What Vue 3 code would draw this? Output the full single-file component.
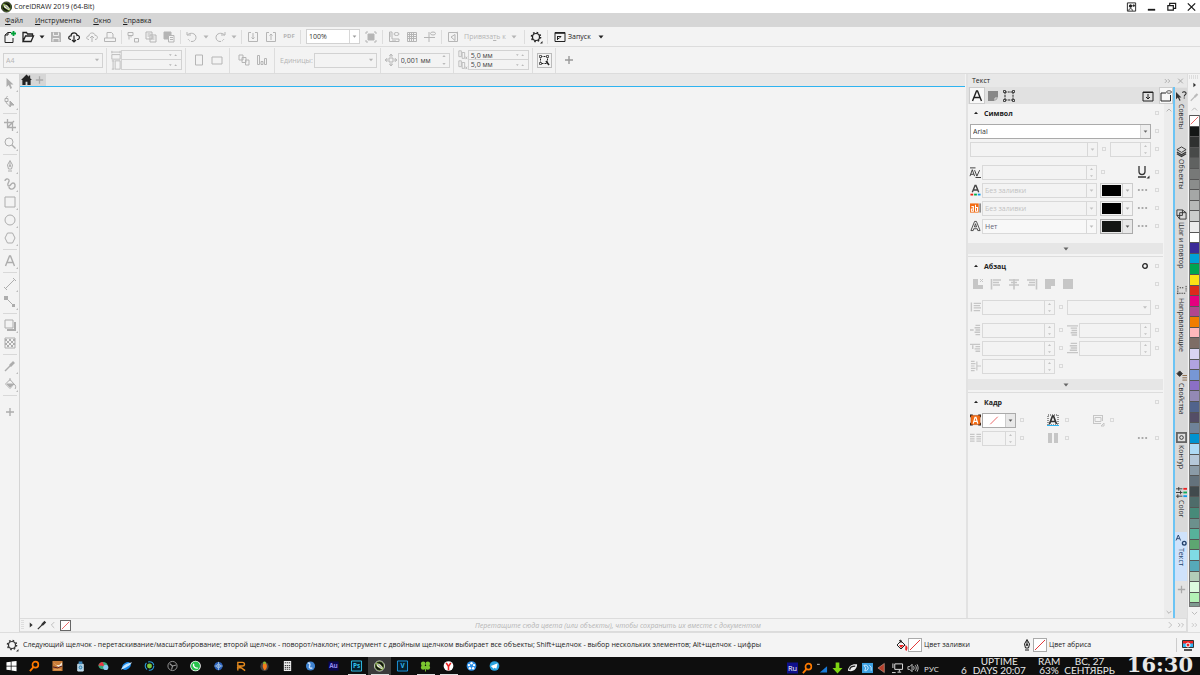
<script setup>
import { h } from 'vue'

const glyphs = {
  logo: '<circle cx="6" cy="6" r="5.500" fill="#111"/><circle cx="6" cy="6" r="4.800" fill="none" stroke="#6a9a2c" stroke-width=".7"/><path d="M2.500 3L6.500 4L9.500 7.500L9.500 9.500L7.500 9L3.500 6.500z" fill="#fff" stroke="#9fd13a" stroke-width=".6"/><path d="M4 4l4 4" stroke="#222" stroke-width=".8"/>',
  user: '<path d="M1.500 1.500h9v9h-9z"/><circle cx="5" cy="5" r="1.400" fill="currentColor"/><path d="M3 10c0-3 4-3 4 0M8.500 3v3M7 4.500h3"/>',
  min: '<path d="M2 9h8" stroke-width="2"/>',
  restore: '<path d="M2 4.500h6v5H2zM4 4V2h6.500v5.500H8.500" stroke-width="1.300"/>',
  close: '<path d="M2 2l8 8M10 2l-8 8" stroke-width="1.400"/>',
  fresh: '<path d="M7 1.500H4L1 4v7.500h8V7M4 1.500V4H1"/><path d="M9.500 0v5M7 2.500h5" stroke="#00a13a" stroke-width="1.800"/>',
  open: '<path d="M1 10.500V1.500h3.500l1 1.500h5V5M1 10.500L3.500 5h8l-2.500 5.500z" stroke-width="1.300"/>',
  save: '<path d="M1 1h9l1 1v9H1z" fill="currentColor" stroke="none"/><path d="M3.500 1.500v3h5v-3M3 10.500v-3h6v3" stroke="#eee"/>',
  cloud: '<path d="M3 8.500C-.5 8.500.5 4.500 3 5C3 1 9 1 9 4.500c3-.5 3.500 4 0 4M6 4.500v6.500M4 9l2 2l2-2" stroke-width="1.200"/>',
  cloudup: '<path d="M3 8.500C-.5 8.500.5 4.500 3 5C3 1 9 1 9 4.500c3-.5 3.500 4 0 4M6 11V5M4 7l2-2l2 2"/>',
  print: '<path d="M3 7V1.500h4.500L9 3v4M.5 10.500h11V7H.5z"/>',
  cut: '<path d="M1 1.500h5v3H1zM2 4.500v4M4 4.500v2M7.500 7.500h4v3.500h-4z"/>',
  copy: '<path d="M1 1h6v7H1zM5 4h6v7H5zM2.500 3h3M2.500 5h2M6.500 6h3M6.500 8h3"/>',
  paste: '<path d="M1 1h7v3H5v4H1z" fill="currentColor"/><path d="M5.500 4.500h5.500v6.500H5.500zM7 6.500h3M7 8.500h3"/>',
  undo: '<path d="M1 4h4M1 4V1M1.500 4C4 1 10 2 10 6.500C10 9 8 10.500 6 10.500" /><path d="M6 10.500C4 10.500 3 9.500 2 8" stroke-dasharray="1 1"/>',
  redo: '<path d="M11 4H7M11 4V1M10.500 4C8 1 2 2 2 6.500C2 9 4 10.500 6 10.500"/><path d="M6 10.500C8 10.500 9 9.500 10 8" stroke-dasharray="1 1"/>',
  down: '<path d="M4 1.500H1.500v9h9v-9H8M6 2v6M4.500 6.500L6 8l1.500-1.500"/>',
  up: '<path d="M4 1.500H1.500v9h9v-9H8M6 9V3M4.500 4.500L6 3l1.500 1.500"/>',
  fit: '<path d="M3 3h6v6H3z" fill="currentColor"/><path d="M1 3V1h2M9 1h2v2M11 9v2H9M3 11H1V9"/>',
  ruler: '<path d="M1.500 1v9.500H11V8H4V1zM2 3h1M2 5h1M5 9v1M7 9v1"/><ellipse cx="8.500" cy="3" rx="2.500" ry="1.500"/>',
  grid: '<path d="M1.500 1.500h9v9h-9zM1.500 3.500h9M1.500 5.500h9M1.500 7.500h9M3.500 1.500v9M5.500 1.500v9M7.500 1.500v9"/>',
  guide: '<path d="M0 6.500h11M5 1v10"/><ellipse cx="9" cy="2.500" rx="2.500" ry="1.500"/>',
  snap: '<path d="M1.500 1.500h9v9h-9zM8 3.500L4 6l4 3.500M8 3.500v6M9 2l2-1"/>',
  gear: '<circle cx="6" cy="6" r="3.500" stroke-width="1.200"/><circle cx="6" cy="6" r="4.600" stroke-width="1.400" stroke-dasharray="1.600 2.020"/><path d="M12.500 10v2.500H10z" fill="currentColor" stroke="none"/>',
  launch: '<path d="M1 1.500h10v9H1z"/><path d="M1 2h10" stroke-width="1.600"/><path d="M3.500 5v4M3.500 5.500H7L5 7.500H3.500"/>',
  landscape: '<path d="M1 3h10v7H1z"/>', portrait: '<path d="M2.500 1h7v10h-7z"/>',
  pagew: '<path d="M1 5.500h10v5.500H1zM1 1v3M11 1v3M1 2.500h10"/>', pageh: '<path d="M5 1h6v10H5zM1 1h3M1 11h3M2.500 1v10"/>',
  pages: '<path d="M1 1h4v5H1zM4 3.500h4v5H4zM7.500 6h3.500v5H7.500z"/>',
  bars: '<path d="M1.500 1.500h2v9h-2zM5 7.500h2v3H5zM8.500 4.500h2v6h-2z"/>',
  nudge: '<path d="M4 4h4v4H4zM6 0L4.500 2h3zM6 12l1.500-2h-3zM0 6l2-1.500v3zM12 6l-2-1.500v3z"/>',
  dup: '<path d="M1 1h3v7H1zM5 3h3v7H5zM9 8l2 3M11 8l-2 3"/>',
  bounds: '<path d="M2.500 2.500h7v7h-7z" stroke-dasharray="2 1"/><path d="M1.500 1.500h2v2h-2zM8.500 1.500h2v2h-2zM1.500 8.500h2v2h-2z" fill="#f3f3f3" stroke-width=".7"/><path d="M8 7l3 4" stroke-width="1.500"/>',
  plus: '<path d="M6 2v8M2 6h8" stroke-width="1.400"/>',
  home: '<path d="M6 0L0 6h1.500v5.500H5V8h2v3.500h3.500V6H12L10 4V1H8.500v1.500z" fill="currentColor" stroke="none"/>',
  pick: '<path d="M2.500 0v9l2.200-2L6.500 11l1.500-1L6.500 6.500h3z" fill="currentColor" stroke="none"/>',
  shape: '<path d="M3.500 0C0 4 2 8 6 10" /><path d="M1 2.500h3v3H1z" fill="#f3f3f3"/><path d="M6 5l4 4H7l-1 2z" fill="currentColor"/>',
  crop: '<path d="M3.500 0v8.500H12M0 3.500h8.500V12M3.500 8.500L10 2" stroke-width="1.300"/>',
  zoom: '<circle cx="5" cy="5" r="4"/><path d="M8 8l3.500 3.500" stroke-width="1.400"/>',
  pen: '<path d="M6 .5L3.500 5l1 4h3l1-4zM6 2v4M4 11h4"/><circle cx="6" cy="6" r=".8"/>',
  curve: '<path d="M1 3C1 1 4 0 5 2S2.500 5.500 4 7.500S7 5 9 5s3 3 1 5s-5 1-5-1" stroke-width="1.400"/>',
  rect: '<path d="M1 1h10v10H1z"/>', circle: '<circle cx="6" cy="6" r="5"/>', hex: '<path d="M3.500 1h5L11 6l-2.500 5h-5L1 6z"/>',
  text: '<path d="M1.500 11L5.500 1h1l4 10M3 7.500h6" stroke-width="1.400"/>',
  line: '<path d="M1.500 10.500l9-9M0 9l3 3M9 0l3 3"/>',
  connect: '<path d="M2 2l8 8"/><path d="M0 0h4v4H0zM8 8h3v3H8z" fill="currentColor" stroke="none"/>',
  shadow: '<path d="M3 11h8V3" stroke-width="2"/><path d="M1 1h8v8H1z" fill="#f3f3f3"/>',
  checker: '<path d="M1 1h10v10H1z"/><path d="M1 3h10M1 7h10" stroke-width="2" stroke-dasharray="2 2"/><path d="M3 5h8M3 9h8" stroke-width="2" stroke-dasharray="2 2"/>',
  dropper: '<path d="M1 11l6-6" stroke-width="1.500"/><path d="M6 4l2 2M7 5l3-3" stroke-width="2.800"/>',
  bucket: '<path d="M1.500 6l4.500-4.500l4 4.500l-4 4.500zM6 3V0M10 6c2 1 2 4 1 5" /><path d="M3 6h6L6 9z" fill="currentColor"/>',
  bucketred: '<path d="M1 6l4-4l4 4l-4 4zM5 4V1l-2 1" stroke="#222"/><path d="M3 6h5L5 9zM9.500 6c3 2 2 4 1 6c-2-1-1-3-1-6" fill="#e22" stroke="none"/>',
  slash: '<path d="M1 11L11 1" stroke="#e33a3a"/>',
  chevl: '<path d="M7.500 2.500L4 6l3.500 3.500"/>', chevr: '<path d="M4.500 2.500L8 6l-3.500 3.500"/>', chevrr: '<path d="M2.500 3.500L5 6L2.500 8.500M6.500 3.500L9 6L6.500 8.500"/>',
  chevu: '<path d="M2.500 8L6 4.500L9.500 8" stroke-width="1.300"/>', chevd: '<path d="M2.500 4.500L6 8l3.500-3.500" stroke-width="1.300"/>',
  tri: '<path d="M3.500 4.500h5L6 7.500z" fill="currentColor" stroke="none"/>', triu: '<path d="M3 7.500h6L6 4z" fill="currentColor" stroke="none"/>', trir: '<path d="M4.500 3v6L8 6z" fill="currentColor" stroke="none"/>',
  spin: '<path d="M4 2.500h4L6 0zM4 9.500h4L6 12z" fill="currentColor" stroke="none"/>', spinh: '<path d="M0 5h4L2 7.500zM8 7.500h4L10 5z" fill="currentColor" stroke="none"/>',
  para: '<path d="M1 1h10v7L8 11H1z" fill="currentColor" stroke="none"/><path d="M8 11V8h3" stroke="#ddd"/>',
  frame: '<path d="M2 2h8v8H2z" stroke-dasharray="2 .7"/><path d="M.5 .5h2v2h-2zM9.500 .5h2v2h-2zM.5 9.500h2v2h-2zM9.500 9.500h2v2h-2z" fill="#e1e1e1" stroke-width=".8"/>',
  importb: '<path d="M1 2h10v9H1zM6 4v5M4 7l2 2l2-2M1 2.500h10"/>',
  eyebox: '<path d="M6 3H1v8h9.500V5"/><ellipse cx="9" cy="2" rx="2.500" ry="1.300" stroke-width=".7"/>',
  kern: '<path d="M0 10.500l2.500-7L5 10.500M1 8.500h3M5 4l2.500 6.500L10.500 4M0 1.500h6M6 12h6"/>',
  underline: '<path d="M2 0v5.500c0 4 6 4 6 0V0M1 11h8" stroke-width="1.300"/><path d="M12.500 9.500v3h-3z" fill="currentColor" stroke="none"/>',
  afill: '<path d="M2.500 8.500L5.500 1h1l3 7.500M4 6h4" stroke="#444" stroke-width="1.500"/><path d="M.5 11h3" stroke="#e21" stroke-width="2"/><path d="M4.500 11h3" stroke="#0a4" stroke-width="2"/><path d="M8.500 11h3" stroke="#19e" stroke-width="2"/>',
  ab: '<path d="M0 1h9.500v10H0z" fill="#f26b13" stroke="none"/><path d="M1.500 4.500h2.200v5H1.500v-2.500h2M6 2.500v7h2.200v-4H6" stroke="#fff" stroke-width="1.100"/><path d="M11 1v10" stroke="#333"/>',
  aout: '<path d="M1 11L5 1h2l4 10H8.500L8 9H4l-.5 2zM4.800 7h2.400L6 3.500z" stroke-width=".9"/>',
  none: '<path d="M1 1h5v6h5v4H1z" fill="currentColor" stroke="none"/><path d="M8 1l3 3M11 1L8 4"/>',
  left: '<path d="M1.500 1v10.500M3 2h8M3 4.500h6M3 7h7" stroke-width="1.600"/>', center: '<path d="M1 2h10M3 4.500h6M1 7h10M6 1v10.500" stroke-width="1.600"/>', right: '<path d="M10.500 1v10.500M1 2h8M3 4.500h6M2 7h7" stroke-width="1.600"/>',
  just: '<path d="M1 1h10v7H7v3H1z" fill="currentColor" stroke="none"/>', full: '<path d="M1 1h10v10H1z" fill="currentColor" stroke="none"/>',
  lead: '<path d="M1.500 1v10M4 2h8M4 4.500h7M4 7h8M4 10h7" stroke-width="1.500"/>', indent: '<path d="M0 6h4M6 1h5M5 3.500h6M6 6h5M5 8.500h6M6 11h5" stroke-width="1.500"/>', first: '<path d="M0 2h11M6 4.500h5M5 7h6M6 9.500h5M3 3v4" stroke-width="1.500"/>',
  rind: '<path d="M1 1h4M1 3.500h5M1 6h4M1 8.500h5M1 11h4M7 6h5M7.500 1v10" stroke-width="1.300"/>', before: '<path d="M0 1.500h12M4 4h7M5 6.500h6M4 9h7M5 11.500h6" stroke-width="1.500"/>', after: '<path d="M4 1h7M3 3.500h8M4 6h7M3 8.500h8M0 11h12" stroke-width="1.500"/>',
  ring: '<circle cx="6" cy="6" r="2.300" stroke-width="1.300"/>', dots: '<path d="M1 6h2M5 6h2M9 6h2" stroke-width="2"/>',
  aorange: '<path d="M0 0h3v3H0zM9 0h3v3H9zM0 9h3v3H0zM9 9h3v3H9z" fill="#222" stroke="none"/><path d="M1 1h10v10H1z" fill="#f26b13" stroke="#a3400a" stroke-width=".5"/><path d="M3.500 10L5.500 3h1l2 7M4.500 7.500h3" stroke="#fff" stroke-width="1.300"/>',
  agrid: '<path d="M1 1h10v10H1z" stroke-dasharray="1 1"/><path d="M2.500 10L5.500 2h1l3 8M4 7.500h4" stroke-width="1.700"/><path d="M0 11.500h12" stroke="#2bb4f2"/>',
  wrap: '<path d="M1 1.500h10M3 3.500h6v4H3zM1 9.500h8M1.500 1v9M10.500 1v6M12 9v3H9z"/>', cols: '<path d="M0 2h5M0 4.500h5M0 7h5M0 9.500h5M7 2h5M7 4.500h5M7 7h5M7 9.500h5" stroke-width="1.400"/>', cols2: '<path d="M1 1h4v10H1zM7 1h4v10H7z" fill="currentColor" stroke="none"/>',
  hint: '<path d="M0 1v8l2-2l2 4l1-1l-1.500-3H6z" fill="currentColor" stroke="none"/><path d="M7 2c1-2 4-1 4 .5C11 4 9 4 9 6M9 7v1.200" stroke-width="1.200"/>',
  layers: '<path d="M1 4l5-3l5 3l-5 3z"/><path d="M1 6.500l5 3l5-3M1 8.500l5 3l5-3" stroke-width="1.400"/>', step: '<path d="M1 1h6v6H1zM4 4h7v7H4zM1 7l3 4M7 1l4 3"/>',
  guides: '<path d="M2 1v10M1 9h10M11 1v6M4 3h4" stroke-dasharray="1.500 1"/>', props: '<path d="M1 4l3-3l3 3l-3 3z" fill="currentColor"/><path d="M7 6h5M7 8.500h5M7 11h5" stroke="#864"/>',
  contour: '<path d="M0 0h12v12H0z" fill="#666" stroke="none"/><path d="M2 2h8v8H2z" fill="#ddd" stroke="none"/><circle cx="6" cy="6" r="2"/>',
  color: '<path d="M0 2h7M0 6h7M0 10h7M3 0v4M5 4v4M2 8v4"/><path d="M8 2h4" stroke="#e22" stroke-width="2"/><path d="M8 6h4" stroke="#1a5" stroke-width="2"/><path d="M8 10h4" stroke="#19e" stroke-width="2"/>',
  textgear: '<path d="M0 6l2.500-6L5 6M1 4h3"/><circle cx="9" cy="9" r="2" stroke-width="1.500"/>',
  monitor: '<path d="M.5 1.500h11v7H.5z" fill="#2bb4f2" stroke="#333"/><path d="M1 2h10v2.500H1z" fill="#e22" stroke="none"/><circle cx="6" cy="6" r="2" stroke="#fff" fill="#e22"/><path d="M2 11h8" stroke-width="1.500"/>',
  win: '<path d="M.5 2l4.700-.7v4.400H.5zM6 1.200L11.500.5v5.200H6zM.5 6.500h4.700v4.200L.5 10zM6 6.500h5.500v5.200L6 11z" fill="#fff" stroke="none"/>',
  find: '<circle cx="7" cy="4.500" r="3.200" stroke="#ff7a00" stroke-width="1.800"/><path d="M5 7l-4 4.500" stroke="#ff7a00" stroke-width="2"/>',
  fox: '<path d="M.5.5h11v11H.5z" fill="#c97c38" stroke="none"/><path d="M1 2l4 3h3l3-3v4L7 7z" fill="#f3e6d2" stroke="none"/><path d="M1 7l5 1l5-2" stroke="#412"/><path d="M2 10h8" stroke="#e8a862"/>',
  trash: '<path d="M3 4h6v7.500H3z" fill="#a9cfe5" stroke="#d8eaf5"/><path d="M4 1h4v3H4z" fill="#3c84b8" stroke="none"/><circle cx="6" cy="7.500" r="1.500" stroke="#27a"/>',
  ball: '<ellipse cx="5.500" cy="5.500" rx="5" ry="4" fill="#39a87c" stroke="none"/><path d="M5 1.500C2 2 1 4 .5 5.500L7 6z" fill="#e34" stroke="none"/><circle cx="8.500" cy="7.500" r="2.800" fill="#8cc9ee" stroke="none"/>',
  planet: '<ellipse cx="6" cy="6" rx="5" ry="3.500" transform="rotate(-35 6 6)" fill="#1686e8" stroke="none"/><path d="M0 10C2 5 7 3 12 2C10 6 5 8 0 10" fill="#bfe3ff" stroke="none"/>',
  eye: '<circle cx="6" cy="6" r="4.700" stroke="#2b9cd8" stroke-width="1.200" stroke-dasharray="8 2"/><circle cx="6" cy="6" r="2.700" fill="#7ec83e" stroke="none"/>',
  obs: '<circle cx="6" cy="6" r="5" stroke="#999"/><path d="M6 6L3 3.500M6 6l4-1M6 6L5 10" stroke="#999" stroke-width="1.200"/>',
  wa: '<circle cx="6" cy="6" r="5.800" fill="#fff" stroke="none"/><circle cx="6" cy="6" r="4.900" fill="#28c24c" stroke="none"/><path d="M4 3.500c-1 3 2 5.500 4.500 4.500" stroke="#fff" stroke-width="1.500"/>',
  globe: '<circle cx="6" cy="6" r="4.500" fill="#2c62bd" stroke="none"/><path d="M6 1.500v9M1.500 6h9" stroke="#9bd"/><circle cx="6" cy="6" r="2" stroke="#9bd"/>',
  rr: '<path d="M2 11V2h5c3 0 3 4 0 4H3l7 5M1 8h6" stroke="#e58a1e" stroke-width="1.500"/>',
  fl: '<ellipse cx="6" cy="6.500" rx="4.500" ry="5" fill="#444" stroke="none"/><path d="M6 1.500c4 2 3 8 0 9c-2-2-3-6 0-9" fill="#f57c1c" stroke="none"/><circle cx="6" cy="2.500" r="1.500" fill="#8b3" stroke="none"/>',
  calc: '<path d="M2 .5h8v11H2z" fill="#eee" stroke="none"/><path d="M3 2.500h6M3 5.500h6M3 7.500h6M3 9.500h6" stroke="#222" stroke-dasharray="1.500 .7"/>',
  sphere: '<circle cx="6" cy="6" r="5" fill="#3f83d0" stroke="none"/><path d="M3 3c2-1 3 1 2 3s1 3 3 2" stroke="#cfe5ff" stroke-width="1.500"/>',
  au: '<path d="M.5 1h11v10H.5z" fill="#0b0650" stroke="none"/><text x="6" y="8.500" text-anchor="middle" font-size="7" font-weight="700" fill="#928cf0" stroke="none">Au</text>',
  ps: '<path d="M.5 .5h11v11H.5z" fill="#06202e" stroke="#31c5f0"/><text x="6" y="8.500" text-anchor="middle" font-size="7" font-weight="700" fill="#31c5f0" stroke="none">Ps</text>',
  vv: '<path d="M.5 .5h11v11H.5z" fill="#06202e" stroke="#1e9be8"/><text x="6" y="8.500" text-anchor="middle" font-size="7" font-weight="700" fill="#31b5f0" stroke="none">V</text>',
  clover: '<g fill="#7cc62f" stroke="none"><circle cx="3.500" cy="3.500" r="2.500"/><circle cx="8.500" cy="3.500" r="2.500"/><circle cx="3.500" cy="7.500" r="2.500"/><circle cx="8.500" cy="7.500" r="2.500"/></g><path d="M6 6v6" stroke="#7cc62f"/>',
  ya: '<circle cx="6" cy="6" r="5.300" fill="#fff" stroke="none"/><path d="M3.500 2.500L6 6.500L8.500 2.500M6 6v4.500" stroke="#e22" stroke-width="1.700"/>',
  flower: '<circle cx="6" cy="6" r="5.300" fill="#2c8fe8" stroke="none"/><g fill="#fff" stroke="none"><circle cx="6" cy="3" r="1.300"/><circle cx="8.800" cy="5" r="1.300"/><circle cx="7.800" cy="8.400" r="1.300"/><circle cx="4.200" cy="8.400" r="1.300"/><circle cx="3.200" cy="5" r="1.300"/></g>',
  tg: '<circle cx="6" cy="6" r="5.300" fill="#2aa3df" stroke="none"/><path d="M2 6l7.500-3L8 9L6 8L5 9z" fill="#fff" stroke="none"/>',
  ru: '<path d="M0 0h12v12H0z" fill="#10108c" stroke="none"/><text x="6" y="9" text-anchor="middle" font-size="8" fill="#fff" stroke="none">Ru</text>',
  tri3: '<path d="M11 4v7H3z" fill="#1a7ad8" stroke="none"/><path d="M0 2h3" stroke="#ccc"/>', arrow: '<path d="M4 0h4v6h3.500L6 12L.5 6H4z" fill="#7fd612" stroke="none"/>',
  leaf: '<path d="M1 9C1 4 6 1 11 2C11 7 7 11 1 9" fill="#eee" stroke="none"/><path d="M3 8c0-3 3-4 6-4" stroke="#222" stroke-width="1.500"/>',
  blue: '<path d="M0 .5h12v11H0z" fill="#3c9fe0" stroke="none"/><path d="M2 3h3l2 3l-2 3H3l1-3zM8 3l2 2v4" stroke="#cfeaff"/>', horn: '<path d="M1 6l7-5v10z" fill="#b5402c" stroke="#e8d0c0" stroke-width=".5"/>',
  net: '<path d="M3 1.500h8.500v6H3zM6 10.500h4M8 8v2M1 1v5M0 11h4" stroke="#eee"/>', sound: '<path d="M1 4.500h2L5.500 2v8L3 7.500H1zM7 4c1 1 1 3 0 4M9 3c1.500 2 1.500 4 0 6M11 2c1.500 3 1.500 5 0 8" stroke="#ddd" stroke-width=".9"/>'
}
const Ico = (p) => h('svg', { viewBox: '0 0 12 12', class: 'ico', 'aria-hidden': 'true', innerHTML: glyphs[p.n] })
Ico.props = ['n']

const toolbar = ['fresh*', 'open*', 'v*', 'save', 'cloud*', 'cloudup', 'print', '|', 'cut', 'copy', 'paste', '|', 'undo', 'v', 'redo', 'v', '|', 'down', 'up', 'PDF', '|']
const view = ['fit', '|', 'ruler', 'grid', 'guide', '|', 'snap']
const tools = ['pick', 'shape', '|', 'crop', 'zoom', '|', 'pen', 'curve', 'rect', 'circle', 'hex', '|', 'text', '|', 'line', 'connect', '|', 'shadow', 'checker', '|', 'dropper', 'bucket', '|', 'plus']
const tabs = [['hint', 'Советы', 55], ['layers', 'Объекты', 63], ['step', 'Шаг и повтор', 76], ['guides', 'Направляющие', 85], ['props', 'Свойства', 62], ['contour', 'Контур', 55], ['color', 'Color', 48], ['textgear', 'Текст', 49]]
const fills = [['afill', 'Без заливки', false], ['ab', 'Без заливки', false], ['aout', 'Нет', true]]
const swatches = '#141716 #2f3130 #484a49 #606261 #777978 #8b8d8c #a5a7a6 #b7b9b8 #cbcdcc #ececec #ffffff #3b2b98 #00a0d6 #00a551 #fbe116 #dc2a1b #e4007f #b1468f #f07d00 #ffb8bb #7e6d66 #d9d4f3 #b1a3e0 #7797d5 #8b6fc6 #9389b5 #51638c #544d66 #6f8299 #0092d0 #aedaf5 #b6c8d9 #8b9ba7 #64727c #414a4d #4e6c6a #478a79 #6c908d #57b29b #5da671 #7fdbe5 #56a9b9 #b2ccb8 #dcfbdf #b3f2b6'.split(' ')
const apps = ['win', 'find', 'fox', 'trash', 'ball', 'planet', 'eye', 'obs', 'wa', 'globe', 'rr', 'fl', 'calc', 'sphere', 'au', 'ps', 'logo', 'vv', 'clover', 'ya', 'flower', 'tg']
const running = ['ps', 'logo', 'clover', 'ya']
const tray = ['ru', 'find', 'tri3', 'arrow', 'leaf', 'blue', 'horn', 'net', 'sound']
</script>

<template>
  <div class="app">
    <header class="title"><Ico n="logo" /><span class="grow">CorelDRAW 2019 (64-Bit)</span>
      <button v-for="b in ['user', 'min', 'restore', 'close']" :key="b" :aria-label="b" class="wbtn"><Ico :n="b" /></button>
    </header>
    <nav class="menu">
      <a href="#"><u>Ф</u>айл</a><a href="#"><u>И</u>нструменты</a><a href="#"><u>О</u>кно</a><a href="#"><u>С</u>правка</a>
    </nav>
    <div class="bar std">
      <template v-for="(t, i) in toolbar" :key="i">
        <i v-if="t === '|'" class="sep"></i>
        <button v-else-if="t === 'PDF'" class="tb pdf">PDF</button>
        <button v-else :class="['tb', { on: t.endsWith('*'), arr: t[0] === 'v' }]" :aria-label="t"><Ico :n="t[0] === 'v' ? 'tri' : t.replace('*', '')" /></button>
      </template>
      <span class="field zoomf lit"><select aria-label="Масштаб"><option>100%</option></select><Ico n="tri" /></span>
      <template v-for="(t, i) in view" :key="'w' + i">
        <i v-if="t === '|'" class="sep"></i>
        <button v-else class="tb" :aria-label="t"><Ico :n="t" /></button>
      </template>
      <button class="tbl snapto"><span>Привяза<u>т</u>ь к</span><Ico n="tri" /></button>
      <i class="sep"></i><button class="tb on" aria-label="Параметры"><Ico n="gear" /></button><i class="sep"></i>
      <button class="tbl on launch"><Ico n="launch" /><span>Запуск</span><Ico n="tri" /></button>
    </div>
    <div class="bar prop">
      <span class="field paper"><select aria-label="Размер страницы" disabled><option>A4</option></select><Ico n="tri" /></span>
      <i class="sep"></i>
      <div class="pair"><Ico n="pagew" /><Ico n="pageh" /></div>
      <div class="pair stack"><span class="field"><input aria-label="Ширина" disabled><Ico n="spinh" /></span><span class="field"><input aria-label="Высота" disabled><Ico n="spinh" /></span></div>
      <i class="sep"></i><button class="tb" aria-label="Книжная"><Ico n="portrait" /></button><button class="tb" aria-label="Альбомная"><Ico n="landscape" /></button>
      <i class="sep wide"></i><button class="tb" aria-label="Все страницы"><Ico n="pages" /></button><button class="tb" aria-label="Текущая страница"><Ico n="bars" /></button>
      <i class="sep wide"></i>
      <label class="unit"><span>Единицы:</span><span class="field units"><select disabled><option></option></select><Ico n="tri" /></span></label>
      <i class="sep"></i>
      <label class="unit on2"><Ico n="nudge" /><span class="field nudge"><input value="0,001 мм"><Ico n="spin" /></span></label>
      <i class="sep"></i>
      <div class="pair"><Ico n="dup" /><Ico n="dup" /></div>
      <div class="pair stack on2"><span class="field"><input aria-label="X" value="5,0 мм"><Ico n="spinh" /></span><span class="field"><input aria-label="Y" value="5,0 мм"><Ico n="spinh" /></span></div>
      <i class="sep"></i><button class="tb on boxed" aria-label="Рамка"><Ico n="bounds" /></button><i class="sep"></i>
      <button class="tb add" aria-label="Добавить"><Ico n="plus" /></button>
    </div>
    <main class="body">
      <aside class="tools">
        <template v-for="(t, i) in tools" :key="i"><hr v-if="t === '|'"><button v-else :aria-label="t" :class="{ more: t !== 'plus' && t !== 'checker' }"><Ico :n="t" /></button></template>
      </aside>
      <div class="center">
        <div class="work">
          <section class="doc"><div class="doctabs"><button class="on" aria-label="Главная"><Ico n="home" /></button><button aria-label="Новая вкладка"><Ico n="plus" /></button></div></section>
          <section class="docker">
            <header><span class="grow">Текст</span><button aria-label="Свернуть"><Ico n="chevrr" /></button><button aria-label="Закрыть"><Ico n="close" /></button></header>
            <div class="dbody">
              <div class="modes"><button class="sel" aria-label="Символ"><Ico n="text" /></button><button aria-label="Абзац"><Ico n="para" class="grey" /></button><button aria-label="Кадр"><Ico n="frame" /></button><i class="grow"></i><button aria-label="Импорт"><Ico n="importb" /></button><button class="sel" aria-label="Вид"><Ico n="eyebox" /></button></div>
              <div class="scroll">
                <div class="panel">
                  <h2><Ico n="triu" /><span class="grow">Символ</span><button class="dot" aria-label="Стиль"></button></h2>
                  <div class="row"><span class="field fx lit dark"><select aria-label="Шрифт"><option>Arial</option></select><Ico n="tri" /></span><button class="dot" aria-label="Стиль"></button></div>
                  <div class="row"><span class="field fx"><select aria-label="Начертание" disabled></select><Ico n="tri" /></span><button class="dot" aria-label="Стиль"></button><span class="field f41"><input aria-label="Размер" disabled><Ico n="spin" /></span><button class="dot" aria-label="Стиль"></button></div>
                  <div class="row gap"><Ico n="kern" class="lead dk" /><span class="field fx"><input aria-label="Кернинг" disabled><Ico n="spin" /></span><button class="dot" aria-label="Стиль"></button><button class="uline" aria-label="Подчеркивание"><Ico n="underline" /></button><button class="dot" aria-label="Стиль"></button></div>
                  <div v-for="(f, i) in fills" :key="i" class="row"><Ico :n="f[0]" class="lead dk" /><span :class="['field', 'fx', { half: f[2] }]"><select :aria-label="f[1]"><option>{{ f[1] }}</option></select><Ico n="tri" /></span>
                    <button :class="['chip', { act: f[2] }]" aria-label="Цвет"><b></b><Ico n="tri" /></button><button class="dots" aria-label="Ещё"><Ico n="dots" /></button><button class="dot" aria-label="Стиль"></button></div>
                  <button class="fold" aria-label="Развернуть"><Ico n="tri" /></button>
                </div>
                <div class="panel">
                  <h2><Ico n="triu" /><span class="grow">Абзац</span><Ico n="ring" class="ringi" /><button class="dot" aria-label="Стиль"></button></h2>
                  <div class="row aligns"><button v-for="a in ['none', 'left', 'center', 'right', 'just', 'full']" :key="a" :aria-label="a"><Ico :n="a" /></button><i class="grow"></i><button class="dot" aria-label="Стиль"></button></div>
                  <div class="row gap"><Ico n="lead" class="lead" /><span class="field f73"><input aria-label="Интервал" disabled><Ico n="spin" /></span><button class="dot" aria-label="Стиль"></button><span class="field fx plain"><select aria-label="Единицы интервала" disabled></select><Ico n="tri" /></span><button class="dot" aria-label="Стиль"></button></div>
                  <div class="row gap"><Ico n="indent" class="lead" /><span class="field f73"><input aria-label="Отступ слева" disabled><Ico n="spin" /></span><button class="dot" aria-label="Стиль"></button><Ico n="before" class="lead" /><span class="field fx"><input aria-label="Перед абзацем" disabled><Ico n="spin" /></span><button class="dot" aria-label="Стиль"></button></div>
                  <div class="row"><Ico n="first" class="lead" /><span class="field f73"><input aria-label="Первая строка" disabled><Ico n="spin" /></span><button class="dot" aria-label="Стиль"></button><Ico n="after" class="lead" /><span class="field fx"><input aria-label="После абзаца" disabled><Ico n="spin" /></span><button class="dot" aria-label="Стиль"></button></div>
                  <div class="row"><Ico n="rind" class="lead" /><span class="field f73"><input aria-label="Отступ справа" disabled><Ico n="spin" /></span><button class="dot" aria-label="Стиль"></button></div>
                  <button class="fold near" aria-label="Развернуть"><Ico n="tri" /></button>
                </div>
                <div class="panel">
                  <h2><Ico n="triu" /><span class="grow">Кадр</span><button class="dot" aria-label="Стиль"></button></h2>
                  <div class="row"><Ico n="aorange" class="lead dk" /><button class="chip act nofill" aria-label="Заливка кадра"><b><Ico n="slash" /></b><Ico n="tri" /></button><button class="dot" aria-label="Стиль"></button><button class="mid dk" aria-label="Сетка"><Ico n="agrid" /></button><button class="dot" aria-label="Стиль"></button><button class="mid" aria-label="Выравнивание"><Ico n="wrap" /></button><button class="dot" aria-label="Стиль"></button></div>
                  <div class="row"><Ico n="cols" class="lead" /><span class="field f34"><input aria-label="Колонки" disabled><Ico n="spin" /></span><button class="dot" aria-label="Стиль"></button><button class="mid" aria-label="Столбцы"><Ico n="cols2" /></button><button class="dot" aria-label="Стиль"></button><i class="grow"></i><button class="dots" aria-label="Ещё"><Ico n="dots" /></button><button class="dot" aria-label="Стиль"></button></div>
                </div>
                <div class="sbar"><Ico n="chevu" /><Ico n="chevd" /></div>
              </div>
            </div>
          </section>
          <nav class="rail">
            <button v-for="t in tabs" :key="t[1]" :class="{ cur: t[1] === 'Текст' }" :style="{ height: t[2] + 'px' }"><Ico :n="t[0]" /><span>{{ t[1] }}</span></button>
            <button class="add" aria-label="Добавить"><Ico n="plus" /></button>
          </nav>
        </div>
        <div class="docpal"><i class="grip"></i><Ico n="trir" class="dk" /><Ico n="dropper" class="dk" /><Ico n="chevl" /><b class="nocol"><Ico n="slash" /></b><em>Перетащите сюда цвета (или объекты), чтобы сохранить их вместе с документом</em><Ico n="chevr" /><Ico n="chevrr" /></div>
      </div>
      <aside class="palette"><i class="hgrip"></i><Ico n="trir" class="dk" /><Ico n="dropper" /><Ico n="chevu" />
        <div class="sw"><button class="nil" aria-label="Нет цвета"><Ico n="slash" /></button><button v-for="c in swatches" :key="c" :style="{ background: c }" :aria-label="c"></button><button class="part" aria-label="Далее"></button></div>
        <Ico n="chevd" /><Ico n="chevrr" />
      </aside>
    </main>
    <footer class="status"><Ico n="gear" class="gear" /><p>Следующий щелчок - перетаскивание/масштабирование; второй щелчок - поворот/наклон; инструмент с двойным щелчком выбирает все объекты; Shift+щелчок - выбор нескольких элементов; Alt+щелчок - цифры</p>
      <div class="ind"><Ico n="bucketred" /><b><Ico n="slash" /></b><span>Цвет заливки</span></div><div class="ind second"><Ico n="pen" /><b><Ico n="slash" /></b><span>Цвет абриса</span></div><i class="vs"></i><Ico n="monitor" /></footer>
    <div class="taskbar">
      <button v-for="a in apps" :key="a" :aria-label="a" :class="{ run: running.includes(a), front: a === 'logo' }"><Ico :n="a" /></button>
      <i class="grow"></i>
      <div class="tray"><Ico v-for="t in tray" :key="t" :n="t" /><span class="lang">РУС</span></div>
      <div class="up"><span>6</span><span>UPTIME<br>DAYS 20:07</span></div><div class="ram">RAM<br>63%</div><div class="date">ВС, 27<br>СЕНТЯБРЬ</div><time>16:30</time>
    </div>
  </div>
</template>

<style>
body { margin: 0; }
</style>
<style scoped>
* { box-sizing: border-box; }
.app { display: flex; flex-direction: column; height: 100vh; overflow: hidden; background: #f3f3f3; color: #1c1c1c; font: 7px/9px "Open Sans", "Noto Sans", sans-serif; white-space: nowrap; }
button { border: 0; padding: 0; margin: 0; background: none; color: inherit; font: inherit; display: flex; align-items: center; justify-content: center; flex: none; }
.ico { width: 12px; height: 12px; flex: none; fill: none; stroke: currentColor; stroke-width: 1; overflow: visible; }
.grow { flex: 1; }
.title { height: 13px; background: #fff; display: flex; align-items: center; padding: 0 0 0 1px; gap: 2px; }
.title > .ico { width: 11px; }
.wbtn { width: 18px; }
.wbtn .ico { width: 11px; }
.menu { height: 14px; background: #d6d6d6; display: flex; align-items: center; gap: 12px; padding: 0 5px; }
.menu a { color: inherit; text-decoration: none; }
.bar { display: flex; align-items: center; color: #b5b5b5; border-bottom: 1px solid #dcdcdc; }
.std { height: 20px; padding-left: 1px; }
.prop { height: 27px; padding-left: 3px; }
.tb { width: 18px; height: 16px; }
.on { color: #222; }
.arr { width: 10px; }
.pdf { font-size: 6px; font-weight: 700; }
.sep { width: 1px; height: 14px; margin: 0 2px; background: #ddd; flex: none; }
.prop .sep { height: 25px; margin: 0 4px 0 3px; }
.field { display: flex; align-items: center; border: 1px solid #d2d2d2; height: 15px; position: relative; flex: none; color: #b5b5b5; }
.field select, .field input { appearance: none; border: 0; background: none; width: 100%; min-width: 0; height: 100%; padding: 0 2px; margin: 0; font: inherit; color: inherit; opacity: 1; outline: 0; border-radius: 0; }
.field .ico { width: 10px; }
.lit { background: #fff; color: #333; }
.lit .ico { color: #999; }
.zoomf { width: 54px; margin: 0 2px 0 3px; }
.zoomf .ico, .docker .field .ico { border-left: 1px solid #d8d8d8; height: 100%; }
.tbl { height: 16px; }
.snapto { width: 60px; gap: 2px; }
.launch { gap: 2px; padding-left: 4px; }
.launch .ico:last-child { margin-left: 2px; }
.paper { width: 100px; }
.pair { display: flex; flex-direction: column; width: 10px; }
.pair > .ico { width: 10px; height: 10px; }
.stack { width: 61px; }
.stack .field { height: 10px; }
.stack .field + .field { border-top: 0; }
.stack .field .ico { margin: 0 2px; width: 12px; height: 8px; }
.on2 .field { color: #444; }
.on2 .field .ico { color: #bbb; }
.unit { display: flex; align-items: center; gap: 1px; }
.units { width: 63px; }
.nudge { width: 52px; }
.prop .wide { margin: 0 5px 0 3px; }
.boxed { width: 15px; height: 15px; border: 1px solid #bbb; }
.add { color: #999; }
.body { flex: 1; min-height: 0; display: flex; }
.tools { width: 20px; border-right: 1px solid #d4d4d4; padding-top: 1px; color: #adadad; display: flex; flex-direction: column; align-items: center; }
.tools button { width: 18px; height: 18px; position: relative; }
.tools button:last-child { margin-top: 5px; }
.tools .more::after { content: ""; position: absolute; right: 1px; bottom: 1px; border: 1px solid #bbb; border-top-color: transparent; border-left-color: transparent; }
.tools hr { width: 14px; height: 1px; border: 0; background: #d8d8d8; margin: 2px 0; }
.center { flex: 1; min-width: 0; display: flex; flex-direction: column; }
.work { flex: 1; min-height: 0; display: flex; }
.doc { flex: 1; }
.doctabs { height: 13px; background: #e8e8e8; border-bottom: 1px solid #2eb3f0; display: flex; }
.doctabs button { width: 13px; background: #d6d6d6; color: #aaa; }
.doctabs .ico { width: 11px; }
.doctabs .on { color: #222; }
.docker { width: 209px; border-left: 2px solid #e2e2e2; margin-left: 1px; display: flex; flex-direction: column; }
.docker > header { height: 13px; background: #e8e8e8; display: flex; align-items: center; padding-left: 4px; margin-right: -12px; position: relative; z-index: 1; }
.docker > header button { width: 13px; color: #999; }
.docker > header .ico { width: 9px; }
.docker > header button:last-child .ico { width: 7px; }
.dbody { flex: 1; border-right: 2px solid #6cc4f4; min-height: 0; display: flex; flex-direction: column; }
.modes { height: 17px; background: #e1e1e1; display: flex; color: #222; padding-left: 1px; }
.modes button { width: 16px; }
.modes .sel { background: #f8f8f8; border: 1px solid #ccc; }
.modes button:last-child { margin-left: 3px; width: 14px; }
.modes .grey { color: #888; }
.scroll { flex: 1; position: relative; padding-right: 10px; background: #f3f3f3; }
.sbar { position: absolute; right: 0; top: 0; bottom: 0; width: 9px; background: #ececec; color: #aaa; display: flex; flex-direction: column; justify-content: space-between; align-items: center; }
.sbar .ico { width: 8px; }
.panel { color: #c6c6c6; }
.panel + .panel { border-top: 1px solid #ddd; margin-top: 2px; }
h2 { margin: 0; height: 18px; font: inherit; font-weight: 700; color: #222; display: flex; align-items: center; padding-left: 4px; gap: 4px; }
h2 .ico { width: 8px; }
h2 .ringi { width: 12px; margin-right: -4px; }
h2 .dot { margin-left: 0; }
.row { height: 18px; display: flex; align-items: center; padding-left: 2px; }
.gap { margin-top: 5px; }
.fx { flex: 1; min-width: 0; }
.f41 { width: 41px; }
.f73 { width: 73px; }
.f34 { width: 34px; }
.docker .field { border-color: #d9d9d9; color: #c2c2c2; }
.docker .lit { border-color: #aaa; color: #333; }
.docker .half { color: #667; background: #f8f8f8; }
.docker .half .ico { color: #bbb; }
.docker .plain .ico { border-left: 0; }
.docker .dark .ico { background: #eee; color: #666; }
.dot { width: 12px; height: 12px; }
.dot::before { content: ""; width: 4px; height: 4px; border: 1px solid #dadada; box-sizing: border-box; }
.row .lead { width: 11px; margin-right: 1px; }
.dk, .row .dk { color: #333; }
.uline { width: 16px; margin-left: 26px; color: #333; }
.chip { width: 33px; height: 15px; margin-left: 3px; border: 1px solid #ccc; color: #aaa; }
.chip b { flex: 1; height: 11px; margin: 1px; background: #000; display: flex; align-items: center; justify-content: center; }
.chip > .ico { width: 10px; border-left: 1px solid #ccc; height: 100%; }
.act { color: #555; background: #e8e8e8; border-color: #aaa; }
.act b { background: #141614; }
.nofill { width: 34px; margin-left: 0; }
.nofill b { height: 100%; margin: 0; background: #fff; }
.nofill b .ico { height: 9px; }
.dots { width: 18px; color: #aaa; }
.dots .ico { width: 11px; }
.fold { width: 100%; height: 11px; margin-top: 8px; background: #e6e6e6; color: #666; }
.fold.near { margin-top: 4px; }
.aligns button:not(.dot) { width: 18px; }
.row.aligns { padding-left: 1px; }
.mid { width: 16px; margin-left: 17px; }
.rail { width: 12px; padding-top: 14px; background: #e3e3e3; color: #333; }
.rail button { width: 12px; flex-direction: column; justify-content: flex-start; gap: 2px; padding-top: 3px; background: #d9d9d9; }
.rail .ico { width: 11px; height: 11px; }
.rail span { writing-mode: vertical-rl; line-height: 11px; }
.rail .cur { background: #cfe2fb; color: #24416b; }
.rail .add { background: none; color: #aaa; }
.docpal { height: 14px; border: 1px solid #dcdcdc; border-left: 0; display: flex; align-items: center; gap: 1px; color: #b5b5b5; }
.docpal > .ico { width: 10px; }
.docpal em { flex: 1; text-align: center; }
.grip { width: 3px; height: 10px; margin: 0 1px; background: repeating-linear-gradient(#ddd 0 1px, #f3f3f3 1px 2px); }
.nocol { width: 11px; height: 11px; margin-left: 1px; border: 1px solid #666; background: #fff; }
.nocol .ico, .nil .ico { width: 9px; height: 9px; display: block; }
.palette { width: 13px; border-left: 1px solid #ddd; display: flex; flex-direction: column; align-items: center; color: #bbb; padding-bottom: 1px; }
.palette > .ico { width: 9px; }
.hgrip { width: 10px; height: 4px; margin-top: 1px; background: repeating-linear-gradient(90deg, #ddd 0 1px, #f3f3f3 1px 2px); }
.sw { flex: 1; width: 11px; min-height: 0; display: flex; flex-direction: column; background: #555; border: 1px solid #777; border-top-width: 0; }
.sw button { flex: 1; min-height: 0; width: 100%; border-top: 1px solid #555; background-clip: padding-box; }
.sw .nil { background: #fff; }
.sw .part { flex: .3; background: #7e9a90; }
.status { height: 25px; display: flex; align-items: center; padding: 0 6px 1px; background: #f4f4f4; border-top: 1px solid #ddd; }
.gear { margin-right: 5px; color: #333; }
.status p { margin: 0; flex: 1; min-width: 0; overflow: hidden; }
.ind { display: flex; align-items: center; width: 125px; }
.ind b { width: 14px; height: 14px; border: 1px solid #aaa; margin: 0 2px 0 0; background: #fff; }
.ind b .ico { display: block; }
.ind.second { width: 155px; }
.vs { width: 1px; height: 14px; background: #ccc; margin-right: 5px; }
.taskbar { height: 18px; background: #0e0e0e; color: #e8e8e8; display: flex; align-items: stretch; }
.taskbar > button { width: 23px; }
.taskbar > button .ico { width: 11px; }
.taskbar .run { background: linear-gradient(#ddd, #ddd) center bottom / 18px 1px no-repeat; }
.taskbar .front { background-color: #3a3a3a; }
.tray { display: flex; align-items: center; gap: 4px; padding-top: 4px; }
.tray .ico { width: 11px; }
.lang { font-size: 8px; margin-left: 2px; }
.up, .ram, .date { font: 10px/9px Lato, sans-serif; text-align: center; display: flex; align-items: flex-end; }
.up { gap: 6px; margin-left: 22px; }
.ram { margin-left: 12px; }
.date { margin-left: 4px; }
time { font: 700 21px/16px "DejaVu Serif", serif; margin: 0 7px 0 12px; }
</style>
